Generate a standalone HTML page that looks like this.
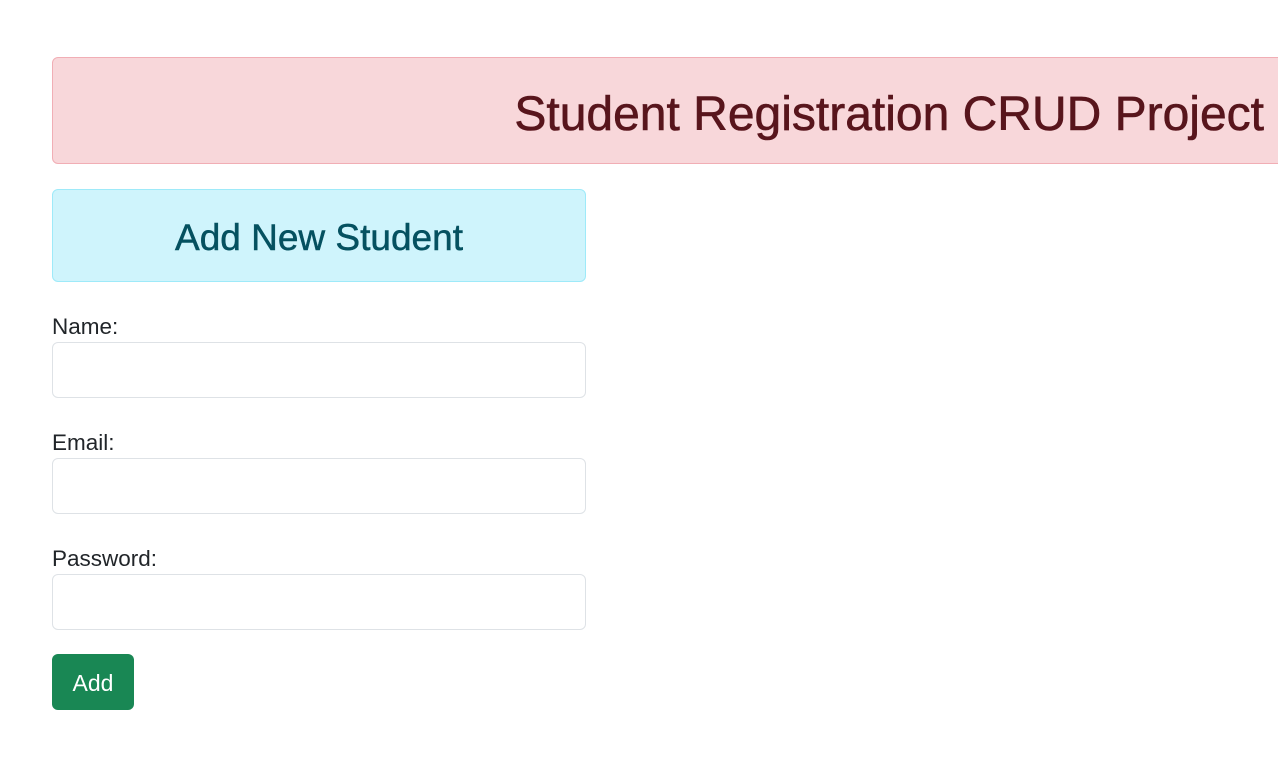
<!DOCTYPE html>
<html><head><style>
body{margin:0;background:#fff;font-family:"Liberation Sans",sans-serif;width:1278px;height:784px;overflow:hidden;position:relative;}
.banner{position:absolute;left:52px;top:57px;width:1240px;height:107px;background:#f8d7da;border:1px solid #f1aeb5;border-radius:6px;box-sizing:border-box;}
.banner h1{position:absolute;right:27px;top:29px;margin:0;font-size:48px;font-weight:normal;color:#58151c;line-height:56px;white-space:nowrap;-webkit-text-stroke:0.6px #58151c;}
.info{position:absolute;left:52px;top:189px;width:534px;height:93px;background:#cff4fc;border:1px solid #9eeaf9;border-radius:6px;box-sizing:border-box;text-align:center;}
.info h2{margin:0;font-size:37px;font-weight:normal;color:#055160;line-height:95px;-webkit-text-stroke:0.5px #055160;}
label{position:absolute;left:52px;font-size:22.5px;color:#212529;}
.inp{position:absolute;left:52px;width:534px;height:56px;border:1px solid #dee2e6;border-radius:6px;box-sizing:border-box;}
.btn{position:absolute;left:52px;top:654px;width:82px;height:56px;background:#198754;border-radius:6px;color:#fff;font-size:23px;text-align:center;line-height:58px;}
</style></head><body>
<div class="banner"><h1>Student Registration CRUD Project</h1></div>
<div class="info"><h2>Add New Student</h2></div>
<label style="top:314px">Name:</label><div class="inp" style="top:342px"></div>
<label style="top:430px">Email:</label><div class="inp" style="top:458px"></div>
<label style="top:546px">Password:</label><div class="inp" style="top:574px"></div>
<div class="btn">Add</div>
</body></html>
